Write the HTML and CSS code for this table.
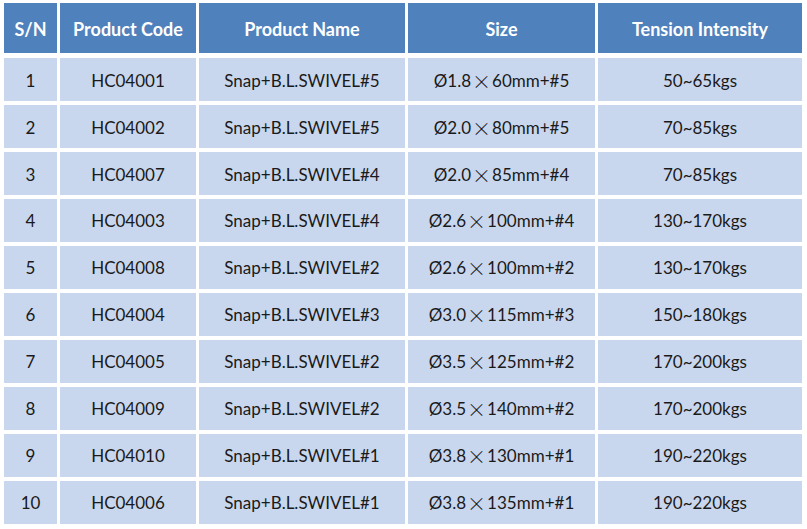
FILE: index.html
```html
<!DOCTYPE html>
<html>
<head>
<meta charset="utf-8">
<link rel="stylesheet" href="styles.css">
</head>
<body>
<div class="table">
  <div class="row head">
    <div class="cell">S/N</div>
    <div class="cell">Product Code</div>
    <div class="cell">Product Name</div>
    <div class="cell">Size</div>
    <div class="cell">Tension Intensity</div>
  </div>
  <div class="row"><div class="cell">1</div><div class="cell">HC04001</div><div class="cell">Snap+B.L.SWIVEL#5</div><div class="cell">Ø1.8<span class="x">×</span>60mm+#5</div><div class="cell">50~65kgs</div></div>
  <div class="row"><div class="cell">2</div><div class="cell">HC04002</div><div class="cell">Snap+B.L.SWIVEL#5</div><div class="cell">Ø2.0<span class="x">×</span>80mm+#5</div><div class="cell">70~85kgs</div></div>
  <div class="row"><div class="cell">3</div><div class="cell">HC04007</div><div class="cell">Snap+B.L.SWIVEL#4</div><div class="cell">Ø2.0<span class="x">×</span>85mm+#4</div><div class="cell">70~85kgs</div></div>
  <div class="row"><div class="cell">4</div><div class="cell">HC04003</div><div class="cell">Snap+B.L.SWIVEL#4</div><div class="cell">Ø2.6<span class="x">×</span>100mm+#4</div><div class="cell">130~170kgs</div></div>
  <div class="row"><div class="cell">5</div><div class="cell">HC04008</div><div class="cell">Snap+B.L.SWIVEL#2</div><div class="cell">Ø2.6<span class="x">×</span>100mm+#2</div><div class="cell">130~170kgs</div></div>
  <div class="row"><div class="cell">6</div><div class="cell">HC04004</div><div class="cell">Snap+B.L.SWIVEL#3</div><div class="cell">Ø3.0<span class="x">×</span>115mm+#3</div><div class="cell">150~180kgs</div></div>
  <div class="row"><div class="cell">7</div><div class="cell">HC04005</div><div class="cell">Snap+B.L.SWIVEL#2</div><div class="cell">Ø3.5<span class="x">×</span>125mm+#2</div><div class="cell">170~200kgs</div></div>
  <div class="row"><div class="cell">8</div><div class="cell">HC04009</div><div class="cell">Snap+B.L.SWIVEL#2</div><div class="cell">Ø3.5<span class="x">×</span>140mm+#2</div><div class="cell">170~200kgs</div></div>
  <div class="row"><div class="cell">9</div><div class="cell">HC04010</div><div class="cell">Snap+B.L.SWIVEL#1</div><div class="cell">Ø3.8<span class="x">×</span>130mm+#1</div><div class="cell">190~220kgs</div></div>
  <div class="row"><div class="cell">10</div><div class="cell">HC04006</div><div class="cell">Snap+B.L.SWIVEL#1</div><div class="cell">Ø3.8<span class="x">×</span>135mm+#1</div><div class="cell">190~220kgs</div></div>
</div>
</body>
</html>
```
FILE: styles.css
```css
html, body {
  margin: 0;
  padding: 0;
  background: #ffffff;
}
body {
  padding: 3px 5px 0 4px;
  font-family: "Lato", "Open Sans", "Liberation Sans", sans-serif;
  font-size: 17px;
  color: #1a1a1a;
}
.table {
  display: flex;
  flex-direction: column;
  gap: 3.9px;
  width: 798px;
}
.row {
  display: grid;
  grid-template-columns: 53px 136px 206px 187px 204px;
  column-gap: 3px;
  height: 43.1px;
}
.row.head {
  height: 50px;
  margin-bottom: 1.1px;
}
.cell {
  background: #c9d7ee;
  display: flex;
  align-items: center;
  justify-content: center;
  white-space: nowrap;
  padding-top: 1px;
}
.head .cell {
  background: #4f81bd;
  color: #ffffff;
  font-weight: 700;
  font-size: 18px;
}
.x {
  font-family: "Noto Sans CJK SC", sans-serif;
  font-weight: 300;
  font-size: 19px;
  line-height: 1;
  margin: 0 1px;
}
```
